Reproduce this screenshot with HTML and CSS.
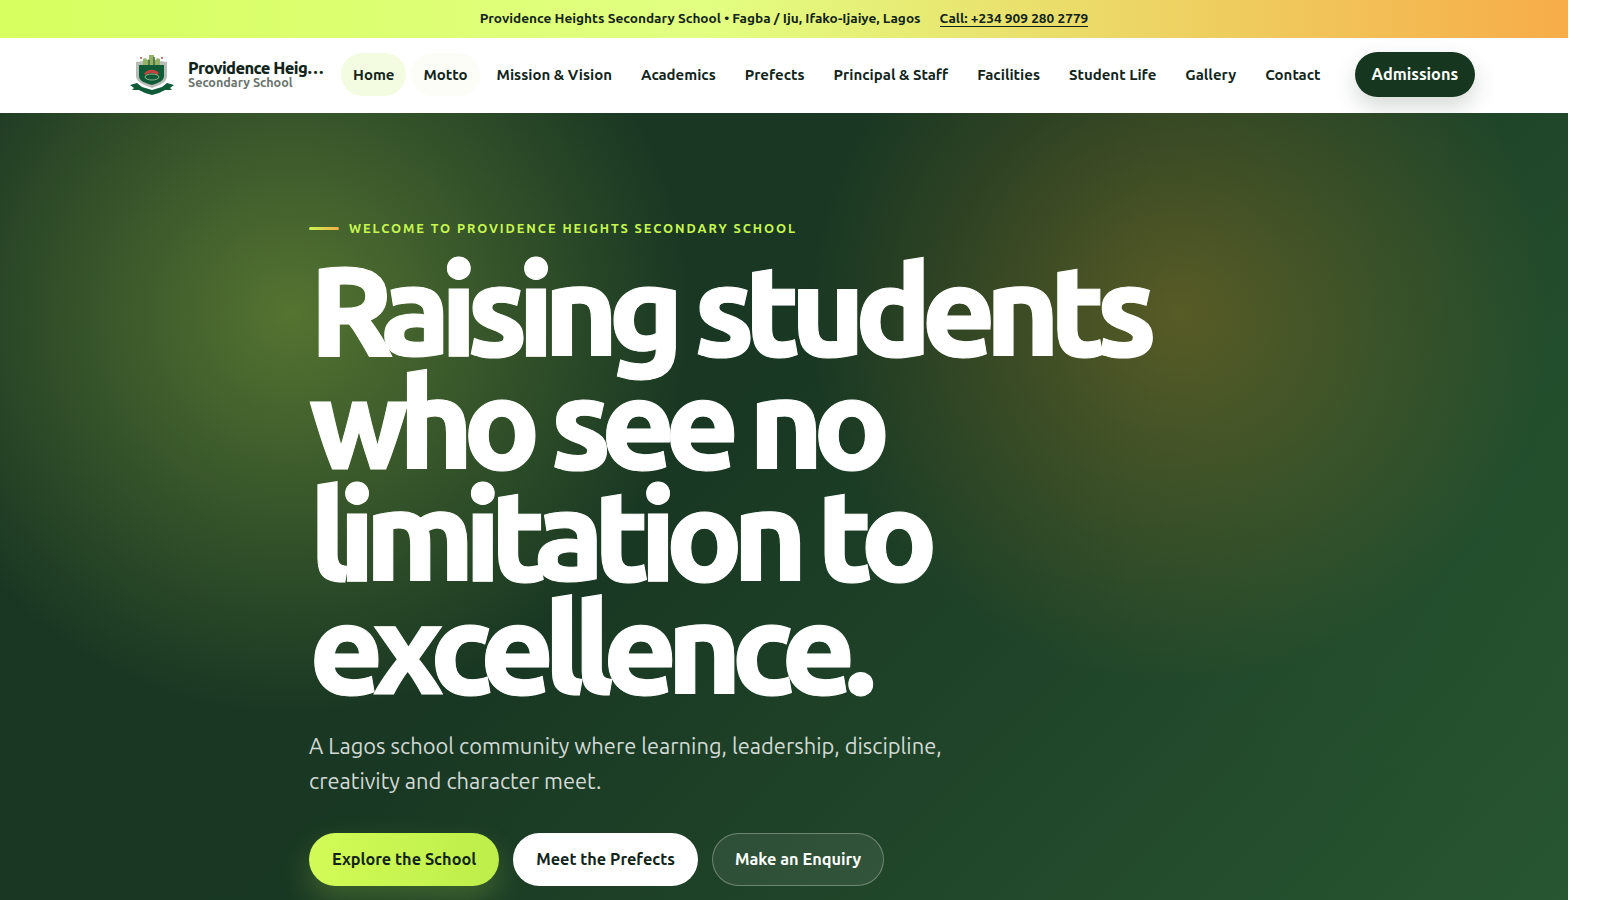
FILE: index.html
```html
<!DOCTYPE html>
<html lang="en">
<head>
    <meta charset="UTF-8">
    <meta name="viewport" content="width=device-width, initial-scale=1">
    <title>Providence Heights Secondary School</title>
    <link rel="stylesheet" href="styles.css">
</head>
<body>
    <div class="page">
        <div class="topbar">
            <span>Providence Heights Secondary School • Fagba / Iju, Ifako-Ijaiye, Lagos</span>
            <a class="topbar-call" href="#">Call: +234 909 280 2779</a>
        </div>
        <header class="nav">
            <a class="brand" href="#">
                <svg class="brand-crest" viewBox="0 0 44 44" aria-hidden="true">
                    <path d="M6 9l16-2 15 2v14c0 6-7 9-15 12-8-3-16-6-16-12z" fill="#b7bdb4"/>
                    <path d="M13 12V6l3-1 1 2 2-1V2h5v4l2 1 1-2 3 1v6z" fill="#93b268"/>
                    <path d="M19 7v5M24 4v8" stroke="#3d6a3c" stroke-width="1.5" fill="none"/>
                    <circle cx="11" cy="5" r="1" fill="#b5564a"/>
                    <circle cx="32" cy="5" r="1" fill="#b5564a"/>
                    <path d="M9 12h25v11c0 5-6 7-12 9-7-2-13-4-13-9z" fill="#0f5b38"/>
                    <path d="M14 21c3-5 10-6 15-1l-2 2c-4-3-8-3-11 0z" fill="#c4413c"/>
                    <ellipse cx="22" cy="24" rx="7" ry="3" fill="none" stroke="#8fb38a"/>
                    <path d="M0 32l7-2 5 4 10 3 10-3 5-4 7 2-4 3 2 2-7 0-6 3-7 2-7-2-6-3-7 0 2-2z" fill="#0f5b38"/>
                </svg>
                <span class="brand-text">
                    <strong>Providence Heights</strong>
                    <small>Secondary School</small>
                </span>
            </a>
            <nav class="nav-links">
                <a class="active" href="#">Home</a>
                <a class="soft" href="#">Motto</a>
                <a href="#">Mission &amp; Vision</a>
                <a href="#">Academics</a>
                <a href="#">Prefects</a>
                <a href="#">Principal &amp; Staff</a>
                <a href="#">Facilities</a>
                <a href="#">Student Life</a>
                <a href="#">Gallery</a>
                <a href="#">Contact</a>
            </nav>
            <a class="nav-cta" href="#">Admissions</a>
        </header>
        <section class="hero">
            <div class="eyebrow"><span class="eyebrow-line"></span>WELCOME TO PROVIDENCE HEIGHTS SECONDARY SCHOOL</div>
            <h1>Raising students who see no limitation to excellence.</h1>
            <p class="lead">A Lagos school community where learning, leadership, discipline, creativity and character meet.</p>
            <div class="actions">
                <a class="btn btn-lime" href="#">Explore the School</a>
                <a class="btn btn-white" href="#">Meet the Prefects</a>
                <a class="btn btn-ghost" href="#">Make an Enquiry</a>
            </div>
        </section>
    </div>
</body>
</html>
```

FILE: styles.css
```css
:root {
    --ink: #10241a;
    --forest: #17361f;
    --lime: #c8f751;
}
html, body {
    margin: 0;
    padding: 0;
    height: 100%;
    overflow: hidden;
    background: #fff;
}
body {
    font-family: Ubuntu, "Noto Sans", "Open Sans", sans-serif;
    color: var(--ink);
}
a {
    color: inherit;
    text-decoration: none;
}
.page {
    width: 1568px;
    height: 900px;
    display: flex;
    flex-direction: column;
    overflow: hidden;
}
.topbar {
    height: 38px;
    flex: none;
    display: flex;
    align-items: center;
    justify-content: center;
    gap: 19px;
    font-size: 13.65px;
    line-height: 16px;
    font-weight: 700;
    padding-bottom: 2px;
    box-sizing: border-box;
    background: linear-gradient(90deg, #d6ff5f 0%, #e2ff82 45%, #f7ac48 100%);
}
.topbar-call {
    border-bottom: 1px solid var(--ink);
}
.nav {
    height: 75px;
    flex: none;
    display: flex;
    align-items: center;
    padding: 0 0 2px 130px;
    background: #fff;
    width: 1600px;
    box-sizing: border-box;
}
.brand {
    display: flex;
    align-items: center;
    gap: 14px;
    width: 211px;
    flex: none;
}
.brand-crest {
    width: 44px;
    height: 44px;
    flex: none;
}
.brand-text {
    display: flex;
    flex-direction: column;
    width: 139px;
    margin-bottom: 1px;
}
.brand-text strong {
    font-size: 16.5px;
    line-height: 17px;
    font-weight: 900;
    letter-spacing: -0.6px;
    white-space: nowrap;
    overflow: hidden;
    text-overflow: ellipsis;
}
.brand-text small {
    margin-top: -1px;
    font-size: 12.6px;
    line-height: 13px;
    font-weight: 700;
    color: #6b736e;
}
.nav-links {
    display: flex;
    gap: 5px;
    font-size: 15px;
    font-weight: 700;
}
.nav-links a {
    padding: 12px;
    line-height: 19px;
    border-radius: 999px;
    white-space: nowrap;
}
.nav-links .active {
    background: #f3fce0;
}
.nav-links .soft {
    background: #fbfdf6;
}
.nav-cta {
    margin-left: 22px;
    padding: 13px 17px;
    line-height: 19px;
    font-size: 16.3px;
    font-weight: 700;
    color: #fff;
    border-radius: 999px;
    background: var(--forest);
    box-shadow: 0 10px 22px rgba(23, 54, 31, 0.18);
}
.hero {
    flex: 1;
    padding: 107px 0 0 309px;
    color: #fff;
    background:
        radial-gradient(circle 400px at 290px 200px, rgba(150, 185, 65, 0.47), rgba(150, 185, 65, 0) 100%),
        radial-gradient(circle 370px at 1180px 200px, rgba(175, 130, 35, 0.4), rgba(175, 130, 35, 0) 100%),
        radial-gradient(circle 520px at 1560px 260px, rgba(40, 95, 50, 0.2), rgba(40, 95, 50, 0) 100%),
        linear-gradient(135deg, #1a3523 0%, #193823 45%, #285631 100%);
}
.eyebrow {
    display: flex;
    align-items: center;
    gap: 10px;
    font-size: 12.8px;
    line-height: 16px;
    font-weight: 700;
    letter-spacing: 0.15em;
    color: var(--lime);
}
.eyebrow-line {
    width: 30px;
    height: 3px;
    border-radius: 2px;
    background: linear-gradient(90deg, #c8f751, #f7ac48);
}
.hero h1 {
    margin: 17px 0 0;
    width: 900px;
    font-size: 128px;
    line-height: 0.88;
    font-weight: 900;
    letter-spacing: -0.085em;
    -webkit-text-stroke: 1px #fff;
}
.lead {
    margin: 25px 0 0;
    width: 680px;
    font-size: 21.9px;
    line-height: 35px;
    color: rgba(255, 255, 255, 0.82);
}
.actions {
    display: flex;
    gap: 14px;
    margin-top: 34px;
}
.btn {
    height: 53px;
    display: flex;
    align-items: center;
    box-sizing: border-box;
    padding: 0 23px;
    font-size: 16.3px;
    font-weight: 700;
    border-radius: 999px;
    color: var(--ink);
}
.btn-lime {
    background: linear-gradient(90deg, #d2fb57, #bdee4a);
    box-shadow: 0 14px 30px rgba(190, 240, 80, 0.22);
}
.btn-white {
    background: #fff;
}
.btn-ghost {
    color: #fff;
    padding: 0 22px;
    background: rgba(255, 255, 255, 0.08);
    border: 1px solid rgba(255, 255, 255, 0.3);
}
```
